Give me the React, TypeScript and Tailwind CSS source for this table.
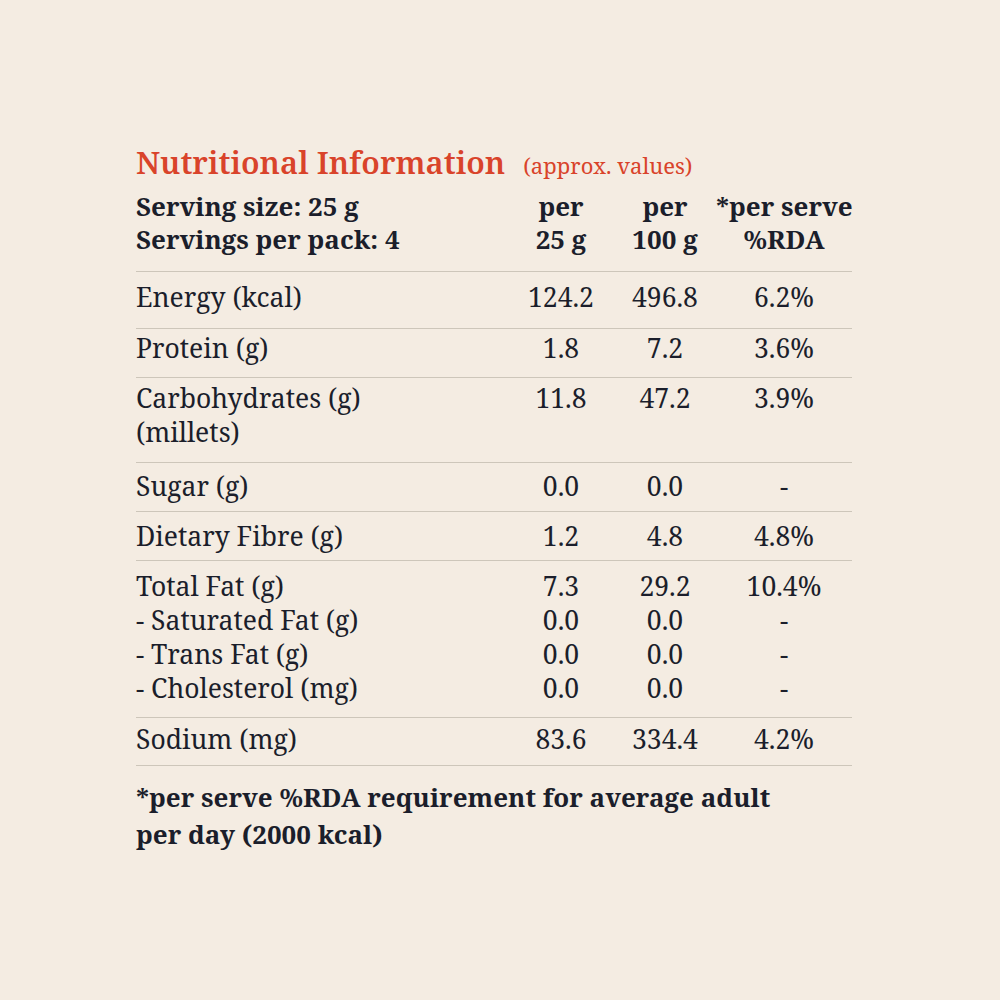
import React from 'react';

type Row = {
  labels: string[];
  a: string[];
  b: string[];
  c: string[];
  pad: string;
};

const ROWS: Row[] = [
  { labels: ['Energy (kcal)'], a: ['124.2'], b: ['496.8'], c: ['6.2%'], pad: 'pt-[8px] pb-[14px]' },
  { labels: ['Protein (g)'], a: ['1.8'], b: ['7.2'], c: ['3.6%'], pad: 'pt-[2px] pb-[12px]' },
  { labels: ['Carbohydrates (g)', '(millets)'], a: ['11.8'], b: ['47.2'], c: ['3.9%'], pad: 'pt-[3px] pb-[13px]' },
  { labels: ['Sugar (g)'], a: ['0.0'], b: ['0.0'], c: ['-'], pad: 'pt-[6px] pb-[8px]' },
  { labels: ['Dietary Fibre (g)'], a: ['1.2'], b: ['4.8'], c: ['4.8%'], pad: 'pt-[7px] pb-[7px]' },
  {
    labels: ['Total Fat (g)', '- Saturated Fat (g)', '- Trans Fat (g)', '- Cholesterol (mg)'],
    a: ['7.3', '0.0', '0.0', '0.0'],
    b: ['29.2', '0.0', '0.0', '0.0'],
    c: ['10.4%', '-', '-', '-'],
    pad: 'pt-[8px] pb-[12px]',
  },
  { labels: ['Sodium (mg)'], a: ['83.6'], b: ['334.4'], c: ['4.2%'], pad: 'pt-[4px] pb-[9px]' },
];

const SERIF = '"Noto Serif", "DejaVu Serif", serif';

const Lines = ({ items, className }: { items: string[]; className?: string }) => (
  <div className={className}>
    {items.map((t, i) => (
      <div key={i} className="whitespace-nowrap">
        {t}
      </div>
    ))}
  </div>
);

const App: React.FC = () => {
  return (
    <div
      className="min-h-screen w-full bg-[#f4ece2] text-[#1b1e2b] pt-[142px] pl-[136px]"
      style={{ fontFamily: SERIF }}
    >
      <div className="w-[716px]">
        {/* title */}
        <div className="flex items-baseline gap-[18px] text-[#d9432a]">
          <h1 className="text-[31px] leading-[40px] font-semibold">Nutritional Information</h1>
          <span className="text-[22px]">(approx. values)</span>
        </div>

        {/* header */}
        <div className="mt-[8px] grid grid-cols-[372px_106px_102px_136px] border-b border-[#cdc6ba] text-[26px] leading-[33px] font-bold pb-[15px]">
          <Lines items={['Serving size: 25 g', 'Servings per pack: 4']} />
          <Lines items={['per', '25 g']} className="text-center" />
          <Lines items={['per', '100 g']} className="text-center" />
          <Lines items={['*per serve', '%RDA']} className="text-center" />
        </div>

        {/* rows */}
        {ROWS.map((r, i) => (
          <div
            key={i}
            className={`grid grid-cols-[372px_106px_102px_136px] border-b border-[#cdc6ba] text-[26.5px] leading-[34px] ${r.pad}`}
          >
            <Lines items={r.labels} />
            <Lines items={r.a} className="text-center" />
            <Lines items={r.b} className="text-center" />
            <Lines items={r.c} className="text-center" />
          </div>
        ))}

        {/* footnote */}
        <p className="mt-[13px] text-[26px] leading-[37px] font-bold">
          *per serve %RDA requirement for average adult
          <br />
          per day (2000 kcal)
        </p>
      </div>
    </div>
  );
};

export default App;
